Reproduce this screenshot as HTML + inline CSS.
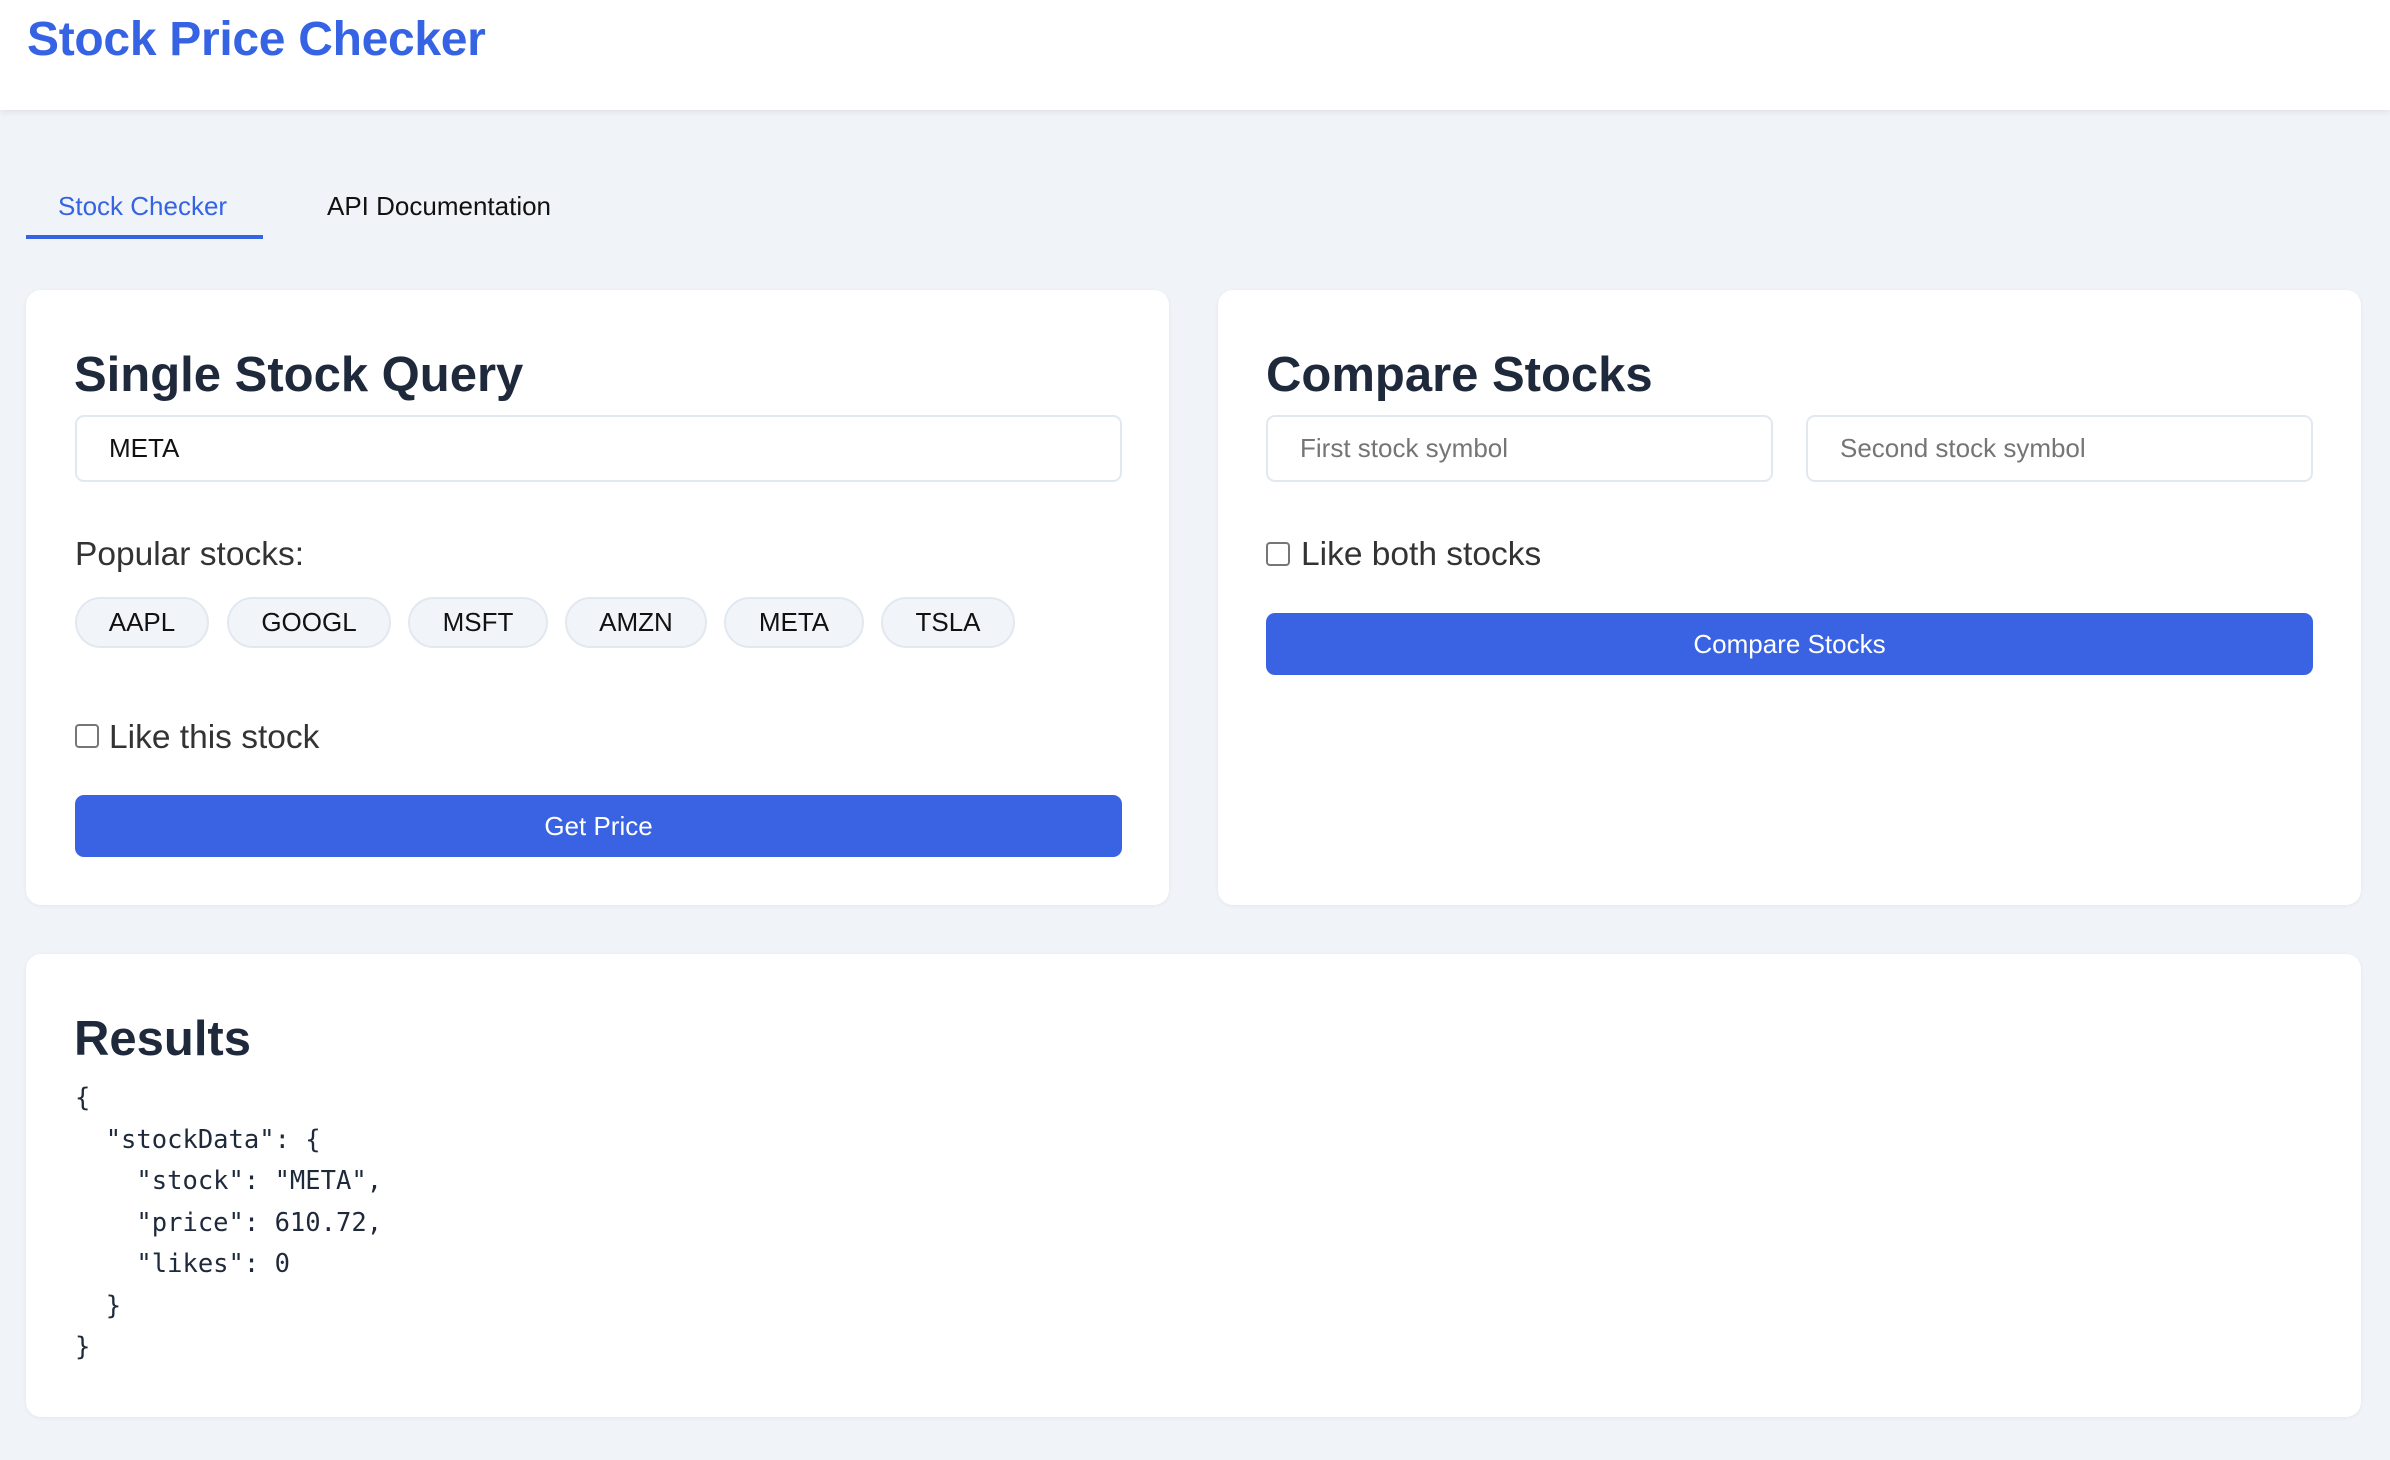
<!DOCTYPE html>
<html><head><meta charset="utf-8"><style>
*{box-sizing:border-box;margin:0;padding:0}
body{width:2390px;height:1460px;background:#f0f4f8;font-family:"Liberation Sans",Arial,sans-serif;color:#1e293b;overflow:hidden;position:relative}
.hdr{position:absolute;left:0;top:0;width:2390px;height:110px;background:#fff;box-shadow:0 2px 6px rgba(0,0,0,.08)}
.hdr h1{position:absolute;left:27px;top:10px;font-size:48px;letter-spacing:-0.3px;font-weight:bold;color:#3563e4;line-height:60px}
.tab{position:absolute;top:188px;font-size:26px;line-height:36px}
.ul{position:absolute;left:26px;top:235px;width:237px;height:4px;background:#3563e4}
.card{position:absolute;background:#fff;border-radius:15px;box-shadow:0 1px 4px rgba(0,0,0,.06)}
h2{position:absolute;font-size:49px;font-weight:bold;color:#1e293b;line-height:60px}
.inp{position:absolute;height:67px;border:2px solid #e2e8f0;border-radius:9px;font-size:26px;line-height:63px;padding-left:32px;color:#111}
.ph{color:#757575}
.lbl{position:absolute;font-size:33.5px;line-height:40px;color:#333}
.chip{position:absolute;top:597px;height:51px;border:2px solid #e2e8f0;background:#f1f5f9;border-radius:26px;font-size:26px;line-height:47px;text-align:center;color:#111}
.cb{position:absolute;width:24px;height:24px;border:2px solid #767676;border-radius:4px;background:#fff}
.btn{position:absolute;height:62px;background:#3a63e4;border-radius:9px;color:#fff;font-size:26px;line-height:62px;text-align:center}
pre{position:absolute;left:75px;top:1078px;font-family:"DejaVu Sans Mono","Liberation Mono",monospace;font-size:25.5px;line-height:41.5px;color:#1e293b}
</style></head><body>
<div class="hdr"><h1>Stock Price Checker</h1></div>
<div class="tab" style="left:58px;color:#3563e4">Stock Checker</div>
<div class="tab" style="left:327px;color:#111">API Documentation</div>
<div class="ul"></div>

<div class="card" style="left:26px;top:290px;width:1143px;height:615px"></div>
<h2 style="left:74px;top:345px">Single Stock Query</h2>
<div class="inp" style="left:75px;top:415px;width:1047px">META</div>
<div class="lbl" style="left:75px;top:535px">Popular stocks:</div>
<div class="chip" style="left:75px;width:134px">AAPL</div>
<div class="chip" style="left:227px;width:164px">GOOGL</div>
<div class="chip" style="left:408px;width:140px">MSFT</div>
<div class="chip" style="left:565px;width:142px">AMZN</div>
<div class="chip" style="left:724px;width:140px">META</div>
<div class="chip" style="left:881px;width:134px">TSLA</div>
<div class="cb" style="left:75px;top:724px"></div>
<div class="lbl" style="left:109px;top:718px">Like this stock</div>
<div class="btn" style="left:75px;top:795px;width:1047px">Get Price</div>

<div class="card" style="left:1218px;top:290px;width:1143px;height:615px"></div>
<h2 style="left:1266px;top:345px">Compare Stocks</h2>
<div class="inp ph" style="left:1266px;top:415px;width:507px">First stock symbol</div>
<div class="inp ph" style="left:1806px;top:415px;width:507px">Second stock symbol</div>
<div class="cb" style="left:1266px;top:542px"></div>
<div class="lbl" style="left:1301px;top:535px">Like both stocks</div>
<div class="btn" style="left:1266px;top:613px;width:1047px">Compare Stocks</div>

<div class="card" style="left:26px;top:954px;width:2335px;height:463px"></div>
<h2 style="left:74px;top:1009px">Results</h2>
<pre>{
  "stockData": {
    "stock": "META",
    "price": 610.72,
    "likes": 0
  }
}</pre>
</body></html>
